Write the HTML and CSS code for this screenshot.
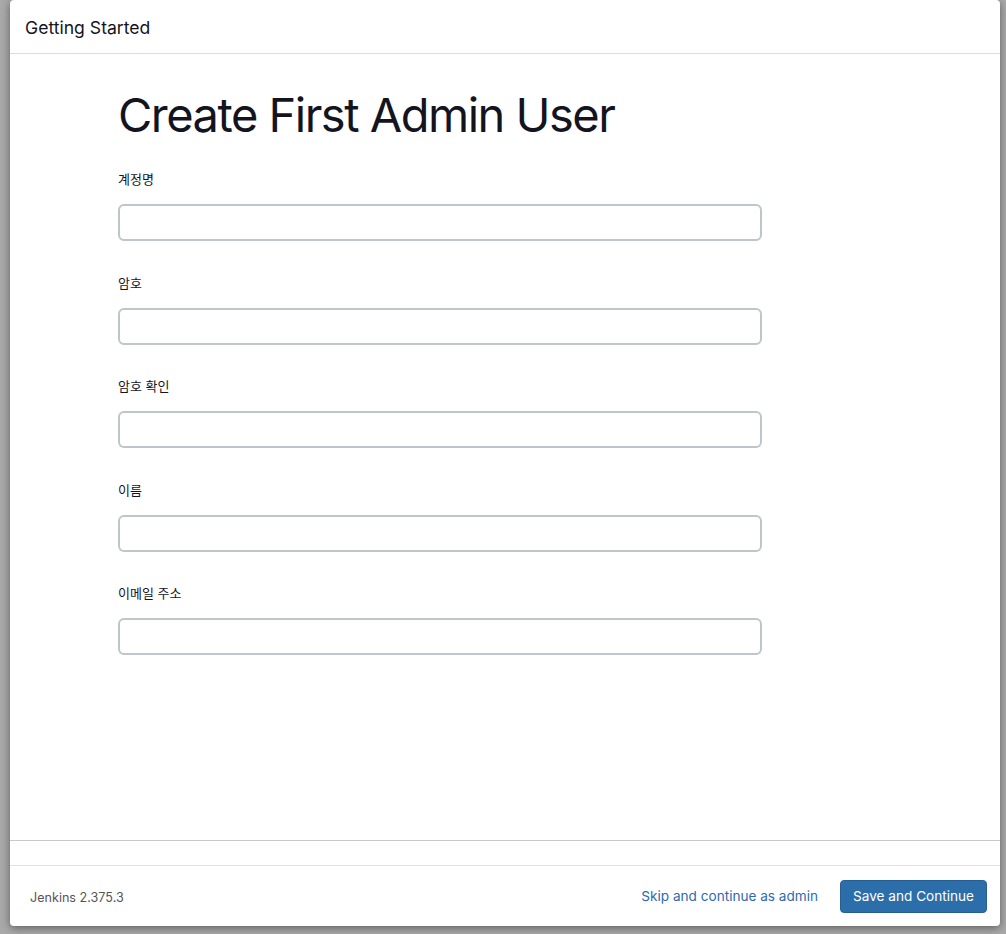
FILE: index.html
```html
<!DOCTYPE html>
<html lang="ko">
<head>
<meta charset="utf-8">
<title>Getting Started</title>
<link rel="stylesheet" href="styles.css">
</head>
<body>
<div class="modal">
  <div class="modal-header">Getting Started</div>
  <div class="modal-body">
    <h1 class="title">Create First Admin User</h1>
    <form class="form">
      <div class="field">
        <label class="label">계정명</label>
        <input class="input" type="text">
      </div>
      <div class="field">
        <label class="label">암호</label>
        <input class="input" type="password">
      </div>
      <div class="field">
        <label class="label">암호 확인</label>
        <input class="input" type="password">
      </div>
      <div class="field">
        <label class="label">이름</label>
        <input class="input" type="text">
      </div>
      <div class="field">
        <label class="label">이메일 주소</label>
        <input class="input" type="text">
      </div>
    </form>
  </div>
  <div class="spacer"></div>
  <div class="modal-footer">
    <span class="version">Jenkins 2.375.3</span>
    <div class="actions">
      <a class="skip" href="#">Skip and continue as admin</a>
      <button class="save" type="button">Save and Continue</button>
    </div>
  </div>
</div>
</body>
</html>
```
FILE: styles.css
```css
html, body {
  margin: 0;
  padding: 0;
}
body {
  background: #a9a9a9;
  width: 1006px;
  height: 934px;
  overflow: hidden;
  font-family: Inter, "Noto Sans CJK KR", sans-serif;
  color: #14141f;
}
.modal {
  margin: 0 6px 0 10px;
  height: 926px;
  background: #fff;
  border-radius: 4px;
  box-shadow: 0 2px 8px rgba(0, 0, 0, 0.45);
  display: flex;
  flex-direction: column;
  overflow: hidden;
}
.modal-header {
  height: 54px;
  border-bottom: 1px solid #dcdcdc;
  padding-left: 15px;
  display: flex;
  align-items: center;
  font-size: 17.6px;
  color: #14141f;
  flex: none;
  box-sizing: border-box;
  padding-top: 1px;
}
.modal-body {
  flex: 1;
  border-bottom: 1px solid #c9c9c9;
  padding: 0 108px;
}
.title {
  margin: 34px 0 0;
  font-size: 47px;
  font-weight: 400;
  line-height: 1.15;
  letter-spacing: -1.5px;
}
.form {
  width: 644px;
  margin-top: 28px;
}
.field {
  display: flex;
  flex-direction: column;
  margin-bottom: 32.5px;
}
.label {
  font-size: 13px;
  line-height: 18px;
  font-weight: 400;
  margin-bottom: 16px;
}
.input {
  box-sizing: border-box;
  height: 37px;
  border: 2px solid #bdc6ca;
  border-radius: 6px;
  background: #fff;
  margin: 0;
}
.spacer {
  height: 24px;
  flex: none;
}
.modal-footer {
  flex: none;
  height: 60px;
  border-top: 1px solid #e0e0e0;
  display: flex;
  align-items: center;
  justify-content: space-between;
  padding: 0 13px 0 20px;
}
.version {
  font-size: 12.6px;
  color: #555;
  padding-top: 2px;
}
.actions {
  display: flex;
  align-items: center;
  gap: 22px;
}
.skip {
  font-size: 13.6px;
  color: #2d6ab0;
  text-decoration: none;
}
.save {
  font-family: Inter, sans-serif;
  font-size: 13.6px;
  color: #fff;
  background: #2b6ea9;
  border: 1px solid #255f93;
  border-radius: 4px;
  height: 33px;
  padding: 0 12px;
}
```
